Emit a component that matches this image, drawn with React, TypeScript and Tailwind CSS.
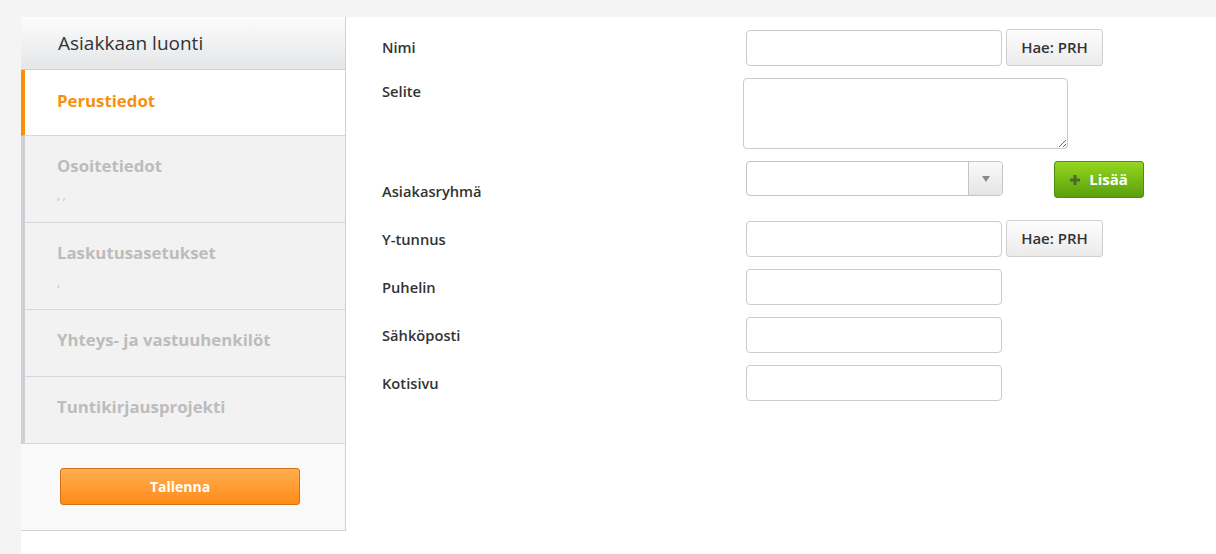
import React from 'react';

const font = { fontFamily: '"Open Sans", "Liberation Sans", sans-serif' };

const navItems = [
  { title: 'Perustiedot', active: true },
  { title: 'Osoitetiedot', sub: ', ,' },
  { title: 'Laskutusasetukset', sub: ',' },
  { title: 'Yhteys- ja vastuuhenkilöt' },
  { title: 'Tuntikirjausprojekti' },
];

const PrhButton = () => (
  <button className="ml-[4px] h-[37px] w-[97px] rounded-[3px] border border-[#cfcfcf] bg-gradient-to-b from-[#fdfdfd] to-[#ebebeb] text-[15px] font-semibold text-[#333]">
    Hae: PRH
  </button>
);

const TextInput = () => (
  <input type="text" className="h-[36px] w-[256px] rounded-[4px] border border-[#cccccc] bg-white px-2 outline-none" />
);

export default function App() {
  return (
    <div className="min-h-screen bg-[#f4f4f4] pt-[17px] pl-[21px]" style={font}>
      <div className="flex h-[537px] bg-white">
        <div className="flex w-[325px] flex-col self-start border-r border-[#cfd2d5]">
          <div className="flex h-[53px] items-center rounded-tl-[3px] border-b border-[#cdd0d3] bg-gradient-to-b from-[#fcfcfc] to-[#e4e6e8] pl-[37px] text-[19px] text-[#333]">
            Asiakkaan luonti
          </div>
          {navItems.map((item) =>
            item.active ? (
              <div key={item.title} className="flex h-[66px] items-center border-b border-[#d5d8db] border-l-4 border-l-[#f7900f] bg-white pb-[4px] pl-[32px] text-[16.8px] font-bold text-[#f7900f]">
                {item.title}
              </div>
            ) : (
              <div key={item.title} className={`flex flex-col border-b border-[#d5d8db] border-l-4 border-l-[#cdd1d5] bg-[#f2f2f2] pl-[32px] ${item.sub ? 'h-[87px] pt-[18px]' : 'h-[67px] pt-[18px]'}`}>
                <span className="text-[16.8px] leading-[24px] font-bold text-[#bcbcbc]">{item.title}</span>
                {item.sub && <span className="mt-[10px] text-[11px] text-[#bcbcbc]">{item.sub}</span>}
              </div>
            )
          )}
          <div className="flex h-[87px] border-b border-[#cfd2d5] bg-[#f9f9f9] pl-[39px] pt-[24px]">
            <button className="h-[37px] w-[240px] rounded-[3px] border border-[#d0701a] bg-gradient-to-b from-[#ffae4d] to-[#ff8c10] text-[14px] font-bold text-white">
              Tallenna
            </button>
          </div>
        </div>

        <div className="flex flex-1 flex-col pl-[36px] pt-[12px] text-[14.7px] font-semibold text-[#333]">
          <div className="flex items-center">
            <div className="w-[364px]">Nimi</div>
            <TextInput />
            <PrhButton />
          </div>
          <div className="mt-[12px] flex">
            <div className="w-[361px] pt-[2px]">Selite</div>
            <textarea className="h-[71px] w-[325px] rounded-[4px] border border-[#cccccc] bg-white outline-none" />
          </div>
          <div className="mt-[12px] flex items-start">
            <div className="w-[364px] pt-[19px]">Asiakasryhmä</div>
            <div className="flex h-[35px] w-[257px] rounded-[4px] border border-[#c4c4c4] bg-white">
              <div className="flex-1" />
              <div className="flex w-[34px] items-center justify-center rounded-r-[3px] border-l border-[#c4c4c4] bg-gradient-to-b from-[#fafafa] to-[#e4e4e4]">
                <svg width="8" height="6" viewBox="0 0 8 6"><path d="M0 0h8L4 6z" fill="#8a8a8a" /></svg>
              </div>
            </div>
            <button className="ml-[51px] flex h-[37px] w-[90px] items-center justify-center gap-[9px] rounded-[3px] border border-[#4f8c12] bg-gradient-to-b from-[#95d61f] to-[#5aa00d] text-[15px] font-bold text-white">
              <svg width="10" height="10" viewBox="0 0 10 10"><path d="M3.5 0h3v3.5H10v3H6.5V10h-3V6.5H0v-3h3.5z" fill="#4b6b2c" /></svg>
              Lisää
            </button>
          </div>
          <div className="mt-[18px] flex items-center">
            <div className="w-[364px]">Y-tunnus</div>
            <TextInput />
            <PrhButton />
          </div>
          {['Puhelin', 'Sähköposti', 'Kotisivu'].map((l) => (
            <div key={l} className="mt-[12px] flex items-center">
              <div className="w-[364px]">{l}</div>
              <TextInput />
            </div>
          ))}
        </div>
      </div>
    </div>
  );
}
